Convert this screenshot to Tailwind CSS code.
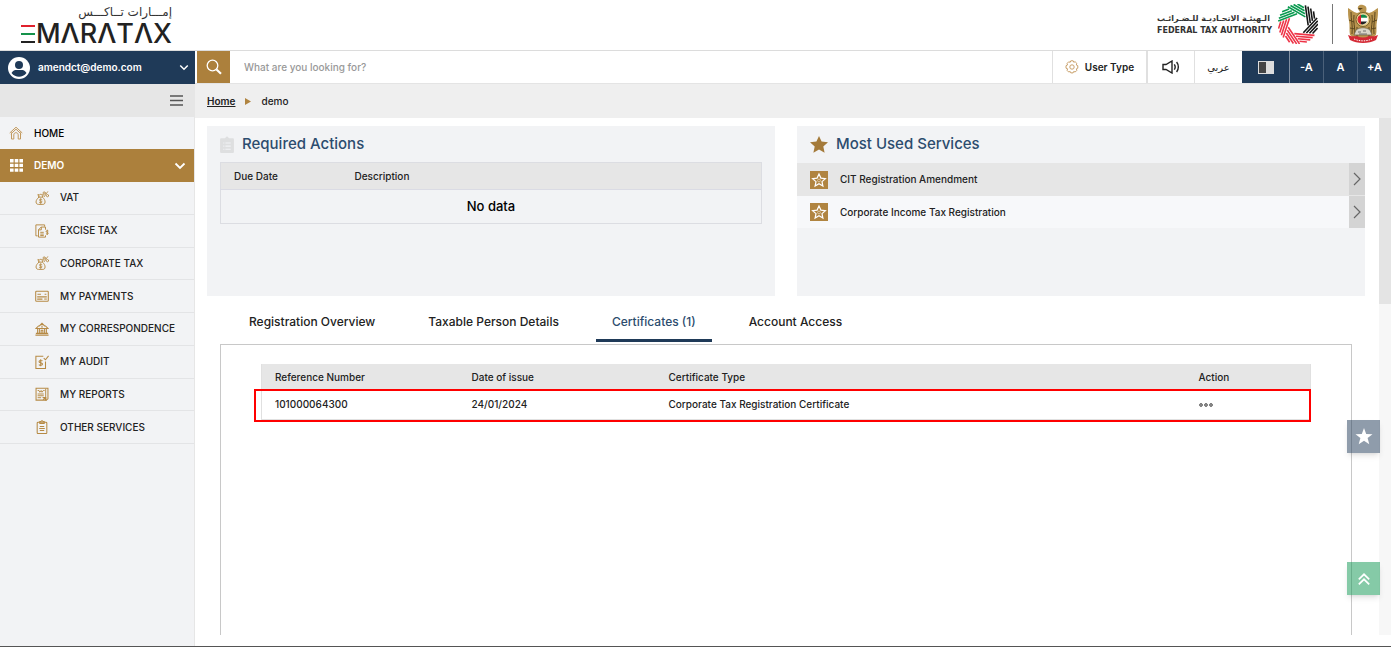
<!DOCTYPE html>
<html lang="en">
<head>
  <meta charset="UTF-8" />
  <title>EmaraTax - Dashboard</title>
  <meta name="viewport" content="width=device-width, initial-scale=1.0" />
  <script src="https://cdn.jsdelivr.net/npm/@tailwindcss/browser@4"></script>
</head>
<body class="h-screen flex flex-col overflow-hidden bg-white text-[#222] text-[10px] font-medium font-[Inter,'DejaVu_Sans',sans-serif] border-b border-[#555]">

<!-- icon sprites -->
<svg class="hidden">
  <symbol id="i-bag" viewBox="0 0 16 16" fill="none" stroke="#b68a45" stroke-linecap="round">
    <path d="M4.500 7h4c2 2 3 3.500 3 5.500 0 2-1 2.800-2.500 2.800H4c-1.500 0-2.800-.8-2.800-2.800C1.200 10.500 2.500 9 4.500 7zM4.300 6.500 3.300 4l2 .7 1.200-1.400L7.700 4.700l1.800-.6-.9 2.400" stroke-width="1.100"/>
    <path d="M8 9.800c-.8-.7-3-.6-3 .6s3 .7 3 2-2.200 1.300-3.100.5M6.500 8.800v5.400"/>
    <path d="M10.500 6.500 14.500.8"/><circle cx="10.500" cy="2.300" r="1.300"/><circle cx="14.300" cy="5.300" r="1.300"/>
  </symbol>
  <symbol id="i-excise" viewBox="0 0 16 16" fill="none" stroke="#b68a45" stroke-width="1.100">
    <path d="M3 13.500H1V1h10v2M12 6.500V3.500H7L4 6.500V15h8v-2"/><path d="M7.200 3.500v3.200H4M6 9.500h4M6 11.500h4M6 13.200h4"/>
    <path d="M15.300 8c-.8-.8-2.600-.5-2.600.6s2.500.7 2.500 1.900-2 1.200-2.700.4M14 6.500v6"/>
  </symbol>
  <symbol id="i-pay" viewBox="0 0 16 16" fill="none" stroke="#b68a45" stroke-width="1.200">
    <rect x=".8" y="2.500" width="14.400" height="11.500" rx="1"/><path d="M2.800 6h4M11 6h2M2.500 9h11M2.500 11.500h6" stroke-width="1.400"/><path d="M10.500 11.500h3"/>
  </symbol>
  <symbol id="i-bank" viewBox="0 0 16 16" fill="none" stroke="#b68a45" stroke-width="1.200">
    <path d="M1 7.500 4 4.500h1L8 1.500l3 3h1l3 3zM1 13h14M.5 15h15"/><path d="M3 8v5M5 8v5M11 8v5M13 8v5M7 13V9.500h2V13M8 4v2.500"/>
  </symbol>
  <symbol id="i-audit" viewBox="0 0 16 16" fill="none" stroke="#b68a45" stroke-width="1.200">
    <path d="M9.500 1.500H1v14h11V7.500"/><path d="m10 3.500 2 2L15.500 1"/><path d="M8.600 6.800c-1-1-4-.8-4 .8s4 1 4 2.800-3 1.700-4.200.6M6.500 4.800v8"/>
  </symbol>
  <symbol id="i-report" viewBox="0 0 16 16" fill="none" stroke="#b68a45" stroke-width="1.200">
    <path d="M2.500 1.500h12.300v12l-2 1.500H1.200V1.500z"/><path d="M12.200 2v9.500L9 15M3 4h1.500l1 2 1.500-2 1 2 1.500-2H11M3 8h7M3 10h7M3 12.200h4" stroke-width="1.100"/><path d="M9.500 12h3v3z" fill="#b68a45"/>
  </symbol>
  <symbol id="i-clip" viewBox="0 0 16 16" fill="none" stroke="#b68a45" stroke-width="1.200">
    <rect x="2.500" y="2.500" width="11" height="13" rx="1"/><path d="M5.500 4V1.800h1.300L8 .7l1.200 1.100h1.300V4zM5.500 7.500h5M4.800 9.800h6.400M5.500 12h5"/>
  </symbol>
  <symbol id="i-star-box" viewBox="0 0 18 18">
    <path d="M0 0h18v18H0z" fill="#b08440"/>
    <path d="m9 3 1.900 4.100 4.500.5-3.400 3 .9 4.500L9 12.800l-3.900 2.300.9-4.500-3.400-3 4.500-.5z" fill="none" stroke="#fff" stroke-width="1.200"/>
    <circle cx="9" cy="9.500" r="1.400" fill="none" stroke="#e9dcc6" stroke-width=".7"/>
  </symbol>
  <symbol id="i-next" viewBox="0 0 10 14"><path d="m2 1 6 6-6 6" fill="none" stroke="#666" stroke-width="1.200"/></symbol>
  <symbol id="i-down" viewBox="0 0 12 8"><path d="m1.500 1.500 4.500 4.500 4.500-4.500" fill="none" stroke="#fff" stroke-width="1.800"/></symbol>
</svg>

<header class="h-[51px] shrink-0 flex justify-between border-b border-[#dcdcdc]">
  <div class="w-[172px] pt-1 flex flex-col items-end">
    <span dir="rtl" lang="ar" class="text-[12px] leading-4 font-normal text-[#333] font-['DejaVu_Sans',sans-serif]">إمـــارات تــاكـــس</span>
    <div class="flex items-center gap-px pt-[2px] text-[#222]">
      <span class="flex flex-col gap-[6px]">
        <i class="block w-[14px] h-[2px] bg-[#e0202c]"></i>
        <i class="block w-[14px] h-[2px] bg-[#15924a]"></i>
        <i class="block w-[14px] h-[2px] bg-[#222]"></i>
      </span>
      <span class="text-[27px] leading-6 font-medium font-[Inter,sans-serif]">MΛRΛTΛX</span>
    </div>
  </div>
  <div class="flex items-start pt-1 pr-3">
    <div class="pt-2 pr-[6px] text-right font-bold text-[#333]">
      <p dir="rtl" lang="ar" class="text-[8px] leading-[14px] text-left font-['DejaVu_Sans',sans-serif]">الـهيئـة الاتحـاديـة للـضـرائـب</p>
      <p class="text-[8px] leading-[10px] font-['DejaVu_Sans',sans-serif]">FEDERAL TAX AUTHORITY</p>
    </div>
    <!-- seven striped blades round a hole -->
    <svg class="size-10" viewBox="-20 -20 40 40" fill="none" stroke-width="1.600">
      <g stroke="#0a9a50">
        <path id="blade" d="M-17.400-9.900H2.800M-15.800-12.300H.9M-13.600-14.700H-1M-10.400-17.100H-3" transform="rotate(-21)"/>
        <use href="#blade" transform="rotate(51)"/>
      </g>
      <g stroke="#161616">
        <use href="#blade" transform="rotate(103)"/><use href="#blade" transform="rotate(154)"/>
      </g>
      <g stroke="#ee3548">
        <use href="#blade" transform="rotate(206)"/><use href="#blade" transform="rotate(257)"/><use href="#blade" transform="rotate(309)"/>
      </g>
    </svg>
    <i class="block w-px h-10 bg-[#777] ml-[14px] mr-[14px]"></i>
    <svg class="w-8 h-10" viewBox="0 0 32 40">
      <path d="M16 1c-3-1-6 1-5 4l2 3-3 1C6 8 3 5 1 4c0 5 0 9 1 13s0 10 1 14l5 4h16l5-4c1-4 0-10 1-14s1-8 1-13c-2 1-5 4-9 5l-3-1c1-3 1-6-3-7z" fill="#b9944e"/>
      <path d="M4 8c0 8 2 14 1 22M7 11c-1 6 1 12 1 20M28 8c0 8-2 14-1 22M25 11c1 6-1 12-1 20M10 23v10M22 23v10M2 16l5 2M30 16l-5 2M3 24l5 1M29 24l-5 1" stroke="#5d481f" stroke-width="1" fill="none"/>
      <path d="M11 4h5l-3 2z" fill="#4f3d1c"/>
      <circle cx="16" cy="15.500" r="7" fill="#e7cf8c" stroke="#7a6029"/>
      <circle cx="16" cy="15.500" r="5" fill="#fff"/>
      <path d="M12 12.500a5 5 0 0 1 8 0v1.300h-8z" fill="#16894a"/><path d="M12 17.500h8a5 5 0 0 1-8 1.500z" fill="#222"/><path d="M13.500 11.200v8.600A5 5 0 0 1 13.500 11.200z" fill="#dd2430" stroke="#dd2430"/>
      <path d="M9 26c4-3 10-3 14 0l2 5H7z" fill="#d9d5c8" stroke="#6d6040" stroke-width=".7"/>
      <path d="M11 28h3m2-1h3m-7 3h8" stroke="#555" stroke-width=".8"/>
      <path d="M1 31c4 2 6 1 9 1 4 2 8 2 12 0 3 0 5 1 9-1l-2 5c-7 4-19 4-26 0z" fill="#d42a35"/>
      <path d="M7 35c6 2.500 12 2.500 18 0" stroke="#fff" stroke-width="1" stroke-dasharray="1.500 1" fill="none"/>
    </svg>
  </div>
</header>

<div class="h-[33px] shrink-0 flex">
  <button class="w-[195px] shrink-0 bg-[#1f3a58] text-white flex items-center pl-2 pr-[6px] font-semibold">
    <svg class="size-[22px] mr-2" viewBox="0 0 22 22"><circle cx="11" cy="11" r="11" fill="#fff"/><circle cx="11" cy="8" r="4" fill="#1f3a58"/><path d="M3.500 16c2-3.500 4-3 7.500-3s5.500-.5 7.500 3c-4 5-11 5-15 0z" fill="#1f3a58"/></svg>
    amendct@demo.com
    <svg class="w-[10px] h-[7px] ml-auto"><use href="#i-down"/></svg>
  </button>
  <form class="flex flex-1 pl-[2px] border-b border-[#e4e4e4]">
    <button type="button" aria-label="Search" class="w-[33px] bg-[#ac803c] flex items-center justify-center">
      <svg class="size-4" viewBox="0 0 16 16" fill="none" stroke="#fff"><circle cx="6.500" cy="6.500" r="5.300" stroke-width="1.300"/><path d="m10.500 10.500 4.500 4.200" stroke-width="2.200"/></svg>
    </button>
    <input type="text" aria-label="Search" placeholder="What are you looking for?" class="flex-1 px-[14px] text-[10px] placeholder:text-[#999] outline-none" />
  </form>
  <nav class="flex border-b border-[#e4e4e4] font-semibold">
    <button class="w-[94px] border-l border-[#e0e0e0] flex items-center justify-center gap-[6px] text-[#222]">
      <svg class="size-[14px]" viewBox="0 0 14 14" fill="none" stroke="#c9a06a"><circle cx="7" cy="7" r="2.200"/><path d="M5.800.8h2.400l.5 1.400 1.500-.4 1.600 1.600-.5 1.600 1.500.7v2.500l-1.400.6.4 1.600-1.600 1.600-1.500-.5-.6 1.400H5.800l-.6-1.400-1.500.5-1.600-1.600.5-1.600L1 8.200V5.700L2.500 5l-.4-1.600 1.600-1.600 1.500.5z"/></svg>
      User Type
    </button>
    <button aria-label="Read aloud" class="w-12 border-l-2 border-[#e0e0e0] flex items-center justify-center">
      <svg class="w-[18px] h-[14px]" viewBox="0 0 18 14" fill="none" stroke="#222" stroke-width="1.400"><path d="M1 4.500h3L10 1v12L4 9.500H1zM12.300 4.300c1 1.500 1 3.900 0 5.400M14.600 2c2.300 2.800 2.300 7.200 0 10"/></svg>
    </button>
    <button lang="ar" class="w-12 border-l border-[#e0e0e0] text-[10px] font-normal font-['DejaVu_Sans',sans-serif]">عربي</button>
    <button aria-label="Contrast" class="w-[47px] bg-[#1f3a58] flex items-center justify-center">
      <svg class="w-4 h-[13px]" viewBox="0 0 16 13"><path d="M0 0h16v13H0z" fill="#ddd"/><path d="M1 1h7v11H1z" fill="#444"/></svg>
    </button>
    <button class="w-[34px] bg-[#1f3a58] text-white border-l border-[#8291a3] text-[11px]">-A</button>
    <button class="w-[34px] bg-[#1f3a58] text-white border-l border-[#4b617a] text-[11px]">A</button>
    <button class="w-[34px] bg-[#1f3a58] text-white border-l border-[#4b617a] text-[11px]">+A</button>
  </nav>
</div>

<div class="flex flex-1 min-h-0">
  <aside class="w-[195px] shrink-0 bg-[#f2f3f5] border-r border-[#e6e6e6] text-[10px]">
    <div class="h-[33px] bg-[#e6e6e6] flex items-center justify-end pr-[11px]">
      <button aria-label="Menu"><svg class="w-[13px] h-[11px]" viewBox="0 0 13 11" stroke="#555" stroke-width="1.300"><path d="M0 1h13M0 5.500h13M0 10h13"/></svg></button>
    </div>
    <a href="#" class="h-8 flex items-center pl-[9px] text-black">
      <svg class="size-[14px] mr-[11px]" viewBox="0 0 14 14" fill="none" stroke="#c39a5e"><path d="M.7 7 7 1.200 13.300 7M2.500 6.500V13h2.300V8.800C4.800 6 9.200 6 9.200 8.800V13h2.300V6.500M1.800 8 7 3.200 12.200 8"/></svg>
      HOME
    </a>
    <a href="#" class="h-[33px] flex items-center pl-[10px] pr-2 bg-[#ac803c] text-white font-semibold">
      <svg class="size-[13px] mr-[11px]" viewBox="0 0 13 13" fill="#fff"><path d="M0 0h3.600v3.400H0zM4.700 0h3.600v3.400H4.700zM9.400 0H13v3.400H9.400zM0 4.700h3.600v3.400H0zM4.700 4.700h3.600v3.400H4.700zM9.400 4.700H13v3.400H9.400zM0 9.400h3.600v3.400H0zM4.700 9.400h3.600v3.400H4.700zM9.400 9.400H13v3.400H9.400z"/></svg>
      DEMO
      <svg class="w-3 h-2 ml-auto"><use href="#i-down"/></svg>
    </a>
    <ul class="h-[262px] grid auto-rows-fr [&>li]:border-b [&>li]:border-[#e3e4e6] [&_a]:h-full [&_a]:flex [&_a]:items-center [&_a]:gap-[11px] [&_a]:pl-[35px] [&_svg]:size-[14px]">
      <li><a href="#"><svg><use href="#i-bag"/></svg>VAT</a></li>
      <li><a href="#"><svg><use href="#i-excise"/></svg>EXCISE TAX</a></li>
      <li><a href="#"><svg><use href="#i-bag"/></svg>CORPORATE TAX</a></li>
      <li><a href="#"><svg><use href="#i-pay"/></svg>MY PAYMENTS</a></li>
      <li><a href="#"><svg><use href="#i-bank"/></svg>MY CORRESPONDENCE</a></li>
      <li><a href="#"><svg><use href="#i-audit"/></svg>MY AUDIT</a></li>
      <li><a href="#"><svg><use href="#i-report"/></svg>MY REPORTS</a></li>
      <li><a href="#"><svg><use href="#i-clip"/></svg>OTHER SERVICES</a></li>
    </ul>
  </aside>

  <div class="flex-1 min-w-0 flex flex-col">
    <nav class="h-[34px] shrink-0 bg-[#efefef] flex items-center gap-[10px] pl-3">
      <a href="#" class="underline font-semibold">Home</a>
      <svg class="w-[6px] h-[7px]" viewBox="0 0 6 7"><path d="M0 0l6 3.500L0 7z" fill="#b08440"/></svg>
      <span>demo</span>
    </nav>

    <div class="flex-1 min-h-0 flex mb-[11px]">
      <main class="flex-1 min-w-0 flex flex-col pt-2 pl-3 pr-[14px]">
        <div class="grid grid-cols-2 gap-[22px] shrink-0">
          <section class="bg-[#f2f3f5] px-[13px] h-[170px]">
            <h2 class="h-9 flex items-center gap-2 text-[15px] text-[#2c4c6e]">
              <svg class="w-[14px] h-[17px]" viewBox="0 0 13 16"><path d="M1 2h3.500L6.500.3 8.500 2H12q1 0 1 1v12q0 1-1 1H1q-1 0-1-1V3q0-1 1-1z" fill="#dedfe0"/><path d="M3 6.500h1M5 6.500h5M3 9.500h1M5 9.500h5M3 12.500h1M5 12.500h5" stroke="#f2f3f5"/></svg>
              Required Actions
            </h2>
            <table class="w-full table-fixed border border-[#dcdde2]">
              <thead>
                <tr class="h-[27px] bg-[#e6e6e6] text-left border-b border-[#dadbe4]">
                  <th class="w-[121px] pl-[13px] font-medium">Due Date</th>
                  <th class="pl-[13px] font-medium">Description</th>
                </tr>
              </thead>
              <tbody>
                <tr class="h-[34px]"><td colspan="2" class="text-center text-[13px] text-black">No data</td></tr>
              </tbody>
            </table>
          </section>

          <section class="bg-[#f2f3f5] h-[170px]">
            <h2 class="h-[37px] flex items-center gap-2 pl-[13px] text-[15px] text-[#2c4c6e]">
              <svg class="w-[18px] h-[17px]" viewBox="0 0 18 17"><path d="m9 0 2.600 5.600 6.400.7-4.700 4.200 1.300 6.300L9 13.600l-5.600 3.200 1.300-6.300L0 6.300l6.400-.7z" fill="#a47a3a"/></svg>
              Most Used Services
            </h2>
            <a href="#" class="h-[33px] flex items-center pl-[13px] gap-3 bg-[#e6e6e6]">
              <svg class="size-[18px]"><use href="#i-star-box"/></svg>
              CIT Registration Amendment
              <span class="ml-auto h-full w-4 bg-[#d4d4d4] border-b border-[#e6e6e6] flex items-center justify-center"><svg class="w-[10px] h-[14px]"><use href="#i-next"/></svg></span>
            </a>
            <a href="#" class="h-8 flex items-center pl-[13px] gap-3 bg-[#f7f8fa]">
              <svg class="size-[18px]"><use href="#i-star-box"/></svg>
              Corporate Income Tax Registration
              <span class="ml-auto h-full w-4 bg-[#d4d4d4] flex items-center justify-center"><svg class="w-[10px] h-[14px]"><use href="#i-next"/></svg></span>
            </a>
          </section>
        </div>

        <div role="tablist" class="shrink-0 flex gap-[21px] pt-[6px] pl-[26px] h-[46px] text-[12px]">
          <button role="tab" class="px-4">Registration Overview</button>
          <button role="tab" class="px-4">Taxable Person Details</button>
          <button role="tab" aria-selected="true" class="px-4 pt-[3px] border-b-3 border-[#1f3a58] text-[#2c4c6e]">Certificates (1)</button>
          <button role="tab" class="px-4">Account Access</button>
        </div>

        <section class="flex-1 mt-[2px] mx-[13px] border border-b-0 border-[#c8c8c8] pt-[19px] px-10">
          <div class="relative">
            <table class="w-full table-fixed border-x border-[#e0e0e0]">
              <thead>
                <tr class="h-[27px] bg-[#e6e6e6] text-left [&>th]:pl-[13px] [&>th]:font-medium">
                  <th class="w-[197px]">Reference Number</th>
                  <th class="w-[197px]">Date of issue</th>
                  <th>Certificate Type</th>
                  <th class="w-[125px]">Action</th>
                </tr>
              </thead>
              <tbody>
                <tr class="h-[28px] border-b border-[#e0e0e0] [&>td]:pl-[13px]">
                  <td>101000064300</td>
                  <td>24/01/2024</td>
                  <td>Corporate Tax Registration Certificate</td>
                  <td>
                    <button aria-label="More actions" class="block"><svg class="w-[14px] h-1" viewBox="0 0 14 4" fill="#aaa" stroke="#555" stroke-width=".9"><circle cx="2" cy="2" r="1.400"/><circle cx="7" cy="2" r="1.400"/><circle cx="12" cy="2" r="1.400"/></svg></button>
                  </td>
                </tr>
              </tbody>
            </table>
            <div class="absolute -left-[7px] right-0 top-[25px] h-[33px] border-2 border-[#f00]"></div>
          </div>
        </section>
      </main>
      <div class="w-3 shrink-0 bg-[#f7f7f7]"><div class="h-[186px] bg-[#e4e4e4]"></div></div>
    </div>
  </div>
</div>

<!-- floating shortcuts -->
<button aria-label="Favourites" class="fixed right-[11px] top-[420px] size-[33px] bg-[#1f3a58]/50 shadow-md flex items-center justify-center">
  <svg class="w-[18px] h-[17px]" viewBox="0 0 18 17"><path d="m9 0 2.200 5.900 6.300.3-4.900 3.900 1.700 6.100L9 12.700l-5.300 3.500 1.700-6.100L.5 6.200l6.300-.3z" fill="#fff"/></svg>
</button>
<button aria-label="Back to top" class="fixed right-[11px] top-[562px] size-[33px] bg-[#0b9650]/50 shadow-md flex items-center justify-center">
  <svg class="w-3 h-3" viewBox="0 0 12 12" fill="none" stroke="#fff" stroke-width="1.700"><path d="m.8 6.300 5.200-5 5.200 5M.8 11.300l5.200-5 5.200 5"/></svg>
</button>

</body>
</html>
